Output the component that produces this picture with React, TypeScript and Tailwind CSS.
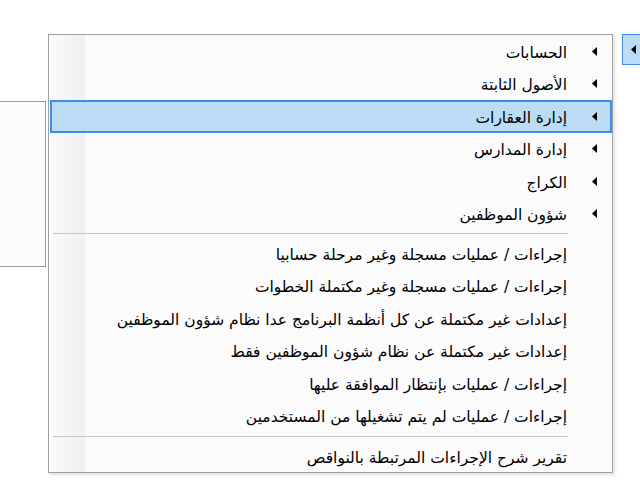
import React from "react";

const Arrow = () => (
  <svg width="5" height="9" viewBox="0 0 5 9" className="block">
    <polygon points="5,0 5,9 0,4.5" fill="#000" />
  </svg>
);

type Item = { label: string; sub?: boolean; active?: boolean };

const group1: Item[] = [
  { label: "الحسابات", sub: true },
  { label: "الأصول الثابتة", sub: true },
  { label: "إدارة العقارات", sub: true, active: true },
  { label: "إدارة المدارس", sub: true },
  { label: "الكراج", sub: true },
  { label: "شؤون الموظفين", sub: true },
];

const group2: Item[] = [
  { label: "إجراءات / عمليات مسجلة وغير مرحلة حسابيا" },
  { label: "إجراءات / عمليات مسجلة وغير مكتملة الخطوات" },
  { label: "إعدادات غير مكتملة عن كل أنظمة البرنامج عدا نظام شؤون الموظفين" },
  { label: "إعدادات غير مكتملة عن نظام شؤون الموظفين فقط" },
  { label: "إجراءات / عمليات بإنتظار الموافقة عليها" },
  { label: "إجراءات / عمليات لم يتم تشغيلها من المستخدمين" },
];

const group3: Item[] = [{ label: "تقرير شرح الإجراءات المرتبطة بالنواقص" }];

const Row = ({ item }: { item: Item }) => (
  <div
    className={
      "flex h-[32.5px] items-center " +
      (item.active ? "bg-[#bcdcf5] border-2 border-[#3d8fe3]" : "border-2 border-transparent")
    }
  >
    <div className="flex w-[43px] shrink-0 items-center justify-start pr-[13px]">
      {item.sub ? <Arrow /> : null}
    </div>
    <div className="relative top-[2px] whitespace-nowrap text-[15.5px] leading-none text-black">
      {item.label}
    </div>
  </div>
);

const Sep = ({ h, off }: { h: string; off: string }) => (
  <div className={"relative " + h}>
    <div className={"absolute left-[3px] right-[44px] h-px bg-[#c4c4c4] " + off} />
  </div>
);

export default function App() {
  return (
    <div
      className="relative h-[480px] w-[640px] overflow-hidden bg-white"
      style={{ fontFamily: '"DejaVu Sans", "Noto Sans", sans-serif' }}
    >
      {/* background window at left */}
      <div className="absolute left-[-2px] top-[101px] h-[166px] w-[48px] border border-[#9c9c9c] bg-[#fcfcfc]" />

      {/* parent menu item (top right) */}
      <div className="absolute left-[622px] top-[34px] flex h-[31px] w-[30px] items-center border border-[#3d8fe3] bg-[#bcdcf5] pl-[8px]">
        <Arrow />
      </div>

      {/* popup menu */}
      <div className="absolute left-[48px] top-[34px] h-[439px] w-[565px] border border-[#a0a0a0] bg-[#fbfbfb] shadow-[2px_2px_3px_rgba(0,0,0,0.12)]">
        <div className="absolute bottom-0 left-0 top-0 w-[36px] bg-[linear-gradient(to_right,#fbfbfb,#f0f0f0)]" />
        <div dir="rtl" className="relative flex flex-col pl-[1px] pr-0">
          {group1.map((it) => (
            <Row key={it.label} item={it} />
          ))}
          <Sep h="h-[7px]" off="top-[3px]" />
          {group2.map((it) => (
            <Row key={it.label} item={it} />
          ))}
          <Sep h="h-[8px]" off="top-[4px]" />
          {group3.map((it) => (
            <Row key={it.label} item={it} />
          ))}
        </div>
      </div>
    </div>
  );
}
